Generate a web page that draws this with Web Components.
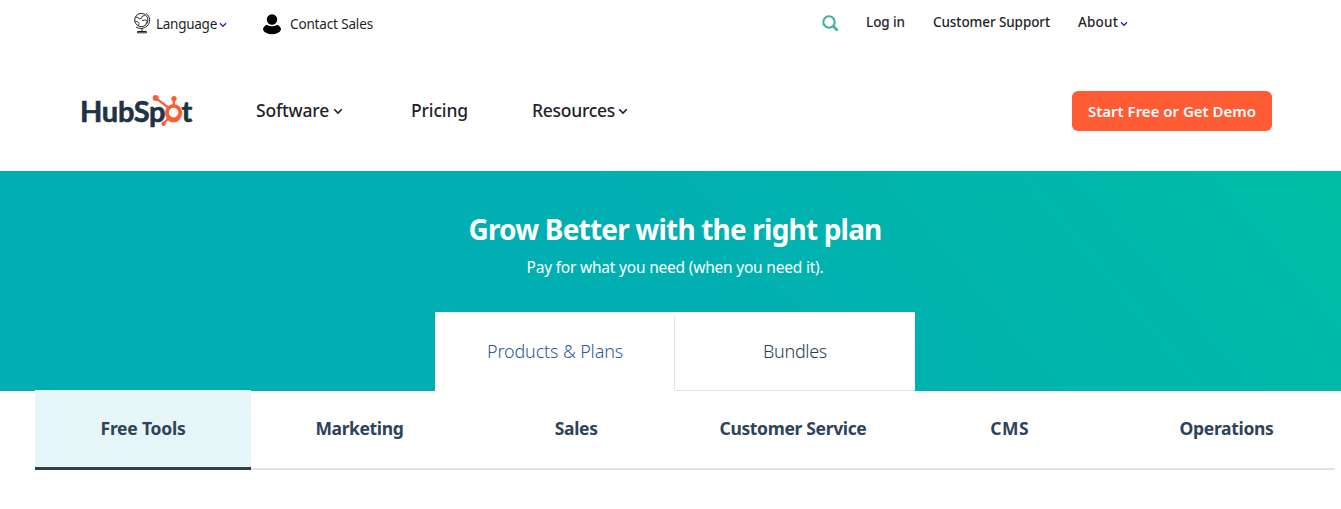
<!DOCTYPE html>
<html lang="en">
<head>
<meta charset="utf-8">
<title>HubSpot Pricing</title>
<style>
body{margin:0;background:#fff;font-family:"Noto Sans","Open Sans",sans-serif;color:#213343;overflow:hidden}
</style>
</head>
<body>
<pricing-page></pricing-page>
<script>
const define = (name, html, ready) => customElements.define(name, class extends HTMLElement {
  connectedCallback() {
    if (this.shadowRoot) return;
    const t = document.createElement('template');
    t.innerHTML = html;
    this.attachShadow({mode: 'open'}).append(t.content.cloneNode(true));
    if (ready) ready(this);
  }
});

// A single line of text, tracked so that it fills the width in its "w" attribute.
define('fit-label', `<style>:host{display:block;white-space:nowrap;flex:none}span{display:inline-block}</style><span><slot></slot></span>`, el => {
  const w = +el.getAttribute('w'), span = el.shadowRoot.querySelector('span');
  el.style.width = w + 'px';
  const natural = span.getBoundingClientRect().width;
  span.style.letterSpacing = (w - natural) / el.textContent.length + 'px';
});

define('icon-chevron', `<style>:host{display:block;flex:none;width:10px;height:7px}svg{display:block;width:100%;height:100%}</style>
<svg viewBox="0 0 10 7"><path d="M1.2 1.3 5 5.1 8.8 1.3" fill="none" stroke="currentColor" stroke-width="1.6"/></svg>`);

define('icon-globe', `<style>:host{display:block;flex:none;width:18px;height:22px}svg{display:block}</style>
<svg width="18" height="22" viewBox="0 0 18 22" fill="none" stroke="#222" stroke-width="1">
<circle cx="8.300" cy="8" r="6.600"/><path d="M13 1.300c4.600 3.400 4.800 9.500 1 12.800-3.200 2.800-7.600 2.900-11 .9M9 16v3M4.500 19.500h9v1.300h-9z"/>
<path stroke-width=".9" d="M2.500 5.200l2.600.2 1 1.500 2.400-.6.6-2 2.600-.8M2 9.500l2.500.2 1.600 1.800-.8 2M9 8.500l3.200-.6 2.300 1.200-1.700 2.300"/></svg>`);

define('icon-person', `<style>:host{display:block;flex:none;width:18px;height:21px}svg{display:block}</style>
<svg width="18" height="21" viewBox="0 0 18 21"><circle cx="9" cy="5.500" r="5.200"/><path d="M0 15.800c0-2.600 1.500-4.300 4-5.100 3 2 7 2 10 0 2.500.8 4 2.500 4 5.100-1.300 3-4.500 4.400-9 4.400s-7.700-1.400-9-4.400z"/></svg>`);

define('icon-search', `<style>:host{display:block;flex:none;width:17px;height:17px}svg{display:block}</style>
<svg width="17" height="17" viewBox="0 0 17 17" fill="none" stroke="#3fb0a5" stroke-width="2.100"><circle cx="7" cy="7" r="5.700"/><path d="M11 11l4.600 4.600" stroke-width="2.800"/></svg>`);

define('brand-logo', `<style>
:host{display:block;position:relative;width:112px;height:36px;flex:none;color:#213343;font:700 29px/38px Lato,sans-serif;-webkit-text-stroke:.6px currentColor}
.o{color:#ff5c35}
fit-label{margin-left:-1px}
svg{position:absolute;left:0;top:0}
</style>
<fit-label w="112">HubSp<span class="o">o</span>t</fit-label>
<svg width="112" height="36" viewBox="0 0 112 36" fill="#ff5c35" stroke="#ff5c35">
<circle cx="92.600" cy="20.600" r="6.700" fill="#fff" stroke-width="3.800"/>
<path d="M92.800 13V7M87.300 15.500 75 6.300M87.800 25.800 83 31" stroke-width="2.300"/>
<g stroke="none"><circle cx="93" cy="6.600" r="2.700"/><circle cx="74.700" cy="5.900" r="3"/><circle cx="82.600" cy="31.800" r="2.200"/></g></svg>`);

define('utility-bar', `<style>
:host{display:flex;height:48px;align-items:flex-start;font-size:13.500px;line-height:20px;color:#1f1f26}
icon-globe{margin:12px 5px 0 133px}
.left{margin-top:14px}
.right{margin-top:12px;font-weight:500}
icon-chevron{width:8px;height:6px;color:#2a1fd0}
icon-person{margin:14px 9px 0 36px}
icon-search{margin:15px 27px 0 449px}
</style>
<icon-globe></icon-globe><fit-label class="left" w="61">Language</fit-label><icon-chevron style="margin:22px 0 0 2px"></icon-chevron>
<icon-person></icon-person><fit-label class="left" w="83">Contact Sales</fit-label>
<icon-search></icon-search><fit-label class="right" w="39">Log in</fit-label>
<fit-label class="right" w="117" style="margin-left:28px">Customer Support</fit-label>
<fit-label class="right" w="40" style="margin-left:28px">About</fit-label><icon-chevron style="margin:21px 0 0 2px"></icon-chevron>`);

define('main-nav', `<style>
:host{display:flex;height:123px;align-items:flex-start;font-size:17.500px;font-weight:500;line-height:26px;color:#1f1f2b}
brand-logo{margin:44px 63px 0 81px}
fit-label{margin-top:49px}
icon-chevron{margin:60px 0 0 5px}
button{all:unset;box-sizing:border-box;width:200px;height:40px;margin:43px 0 0 444px;border-radius:6px;background:#ff5c35;color:#fff;font-size:15px;font-weight:600;line-height:40px;padding-left:16px}
button fit-label{margin:0}
</style>
<brand-logo></brand-logo>
<fit-label w="73">Software</fit-label><icon-chevron style="margin-left:4px"></icon-chevron>
<fit-label w="57" style="margin-left:68px">Pricing</fit-label>
<fit-label w="83" style="margin-left:64px">Resources</fit-label><icon-chevron style="margin-left:3px"></icon-chevron>
<button><fit-label w="168">Start Free or Get Demo</fit-label></button>`);

define('plan-tabs', `<style>
:host{display:grid;grid-template:79px / 240px 240px;height:79px;width:480px;background:#fff;font-size:18px;font-weight:300;line-height:79px}
div{box-sizing:border-box;display:flex;justify-content:center}
.on{color:#2f5a9b;line-height:77px;border:1px solid #e3e6ea;border-left-color:#fff;border-bottom:0;border-top-color:#f1f4f6;border-radius:0 5px 0 0}
.off{border-bottom:1px solid #e0e3e6;color:#2d3e50}
</style><div class="on"><fit-label w="136">Products &amp; Plans</fit-label></div><div class="off"><fit-label w="64">Bundles</fit-label></div>`);

define('plan-hero', `<style>
:host{display:flex;flex-direction:column;align-items:center;height:220px;box-sizing:border-box;color:#fff;background:linear-gradient(50deg,#00afb2 50%,#00bda5 99%)}
h1{margin:38px 0 0 9px;font-size:28px;line-height:40px;font-weight:700}
p{margin:7px 0 0 9px;font-size:15.500px;line-height:22px}
plan-tabs{margin:34px 0 0 9px}
</style>
<h1><fit-label w="413">Grow Better with the right plan</fit-label></h1>
<p><fit-label w="297">Pay for what you need (when you need it).</fit-label></p>
<plan-tabs></plan-tabs>`);

define('product-tab', `<style>
:host{display:flex;justify-content:center;box-sizing:border-box;height:80px;border-bottom:2px solid #dfe3eb;line-height:77px}
:host([active]){background:#e5f5f8;border-bottom:3px solid #2d3e50}
</style><slot></slot>`);

define('product-tabs', `<style>
:host{display:grid;position:relative;grid-template-columns:216px repeat(5,216.800px);margin:-1px 0 0 35px;font-size:17.500px;font-weight:700;color:#2e4359}
product-tab:not([active]){margin-top:1px;height:79px;line-height:75px}
</style>
<product-tab active><fit-label w="85">Free Tools</fit-label></product-tab>
<product-tab><fit-label w="88">Marketing</fit-label></product-tab>
<product-tab><fit-label w="43">Sales</fit-label></product-tab>
<product-tab><fit-label w="147">Customer Service</fit-label></product-tab>
<product-tab><fit-label w="39">CMS</fit-label></product-tab>
<product-tab><fit-label w="94">Operations</fit-label></product-tab>`);

define('pricing-page', `<style>:host{display:block}</style>
<utility-bar></utility-bar><main-nav></main-nav><plan-hero></plan-hero><product-tabs></product-tabs>`);
</script>
</body>
</html>
